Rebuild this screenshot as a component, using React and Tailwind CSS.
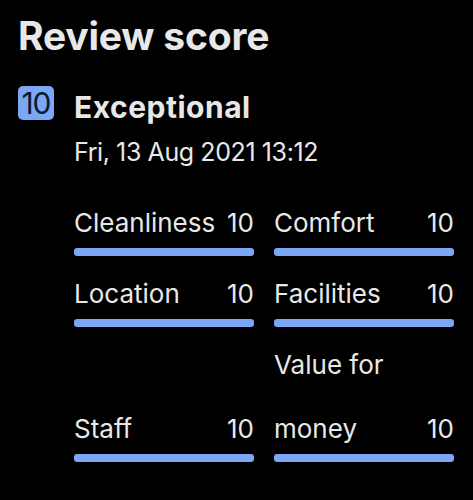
import React from 'react';

const scores = [
  { label: 'Cleanliness', value: 10 },
  { label: 'Comfort', value: 10 },
  { label: 'Location', value: 10 },
  { label: 'Facilities', value: 10 },
  { label: 'Staff', value: 10 },
  { label: 'Value for money', value: 10 },
];

export default function App() {
  return (
    <div className="w-[473px] h-[500px] bg-black text-[#e8e8e8] font-['Inter',sans-serif] overflow-hidden">
      <h1 className="pt-[13px] pl-[18px] text-[39px] leading-[46px] font-bold tracking-[-0.2px]">
        Review score
      </h1>

      <div className="flex items-start pl-[18px] mt-[27px]">
        <div className="w-[36px] h-[34px] rounded-[5px] bg-[#7ba7f4] text-[#0b1a33] text-[30px] leading-none flex items-center justify-center tracking-[-1px]">
          10
        </div>
        <div className="ml-[20px] mt-[4px]">
          <div className="text-[30px] leading-[34px] font-bold tracking-[0.5px]">Exceptional</div>
          <div className="mt-[12px] text-[25px] leading-[32px] tracking-[-0.4px]">Fri, 13 Aug 2021 13:12</div>
        </div>
      </div>

      <div className="ml-[74px] mt-[23px] w-[380px] grid grid-cols-2 gap-x-[20px] gap-y-[6px]">
        {scores.map((s) => (
          <ScoreBar key={s.label} {...s} />
        ))}
      </div>
    </div>
  );
}

function ScoreBar({ label, value }) {
  return (
    <div className="flex flex-col justify-end">
      <div className="flex items-end justify-between text-[26px] leading-[64px]">
        <span className="max-w-[150px]">{label}</span>
        <span>{value}</span>
      </div>
      <div className="mt-[-7px] h-[8px] rounded-[3px] bg-[#7ba7f4]" style={{ width: `${value * 10}%` }} />
    </div>
  );
}
